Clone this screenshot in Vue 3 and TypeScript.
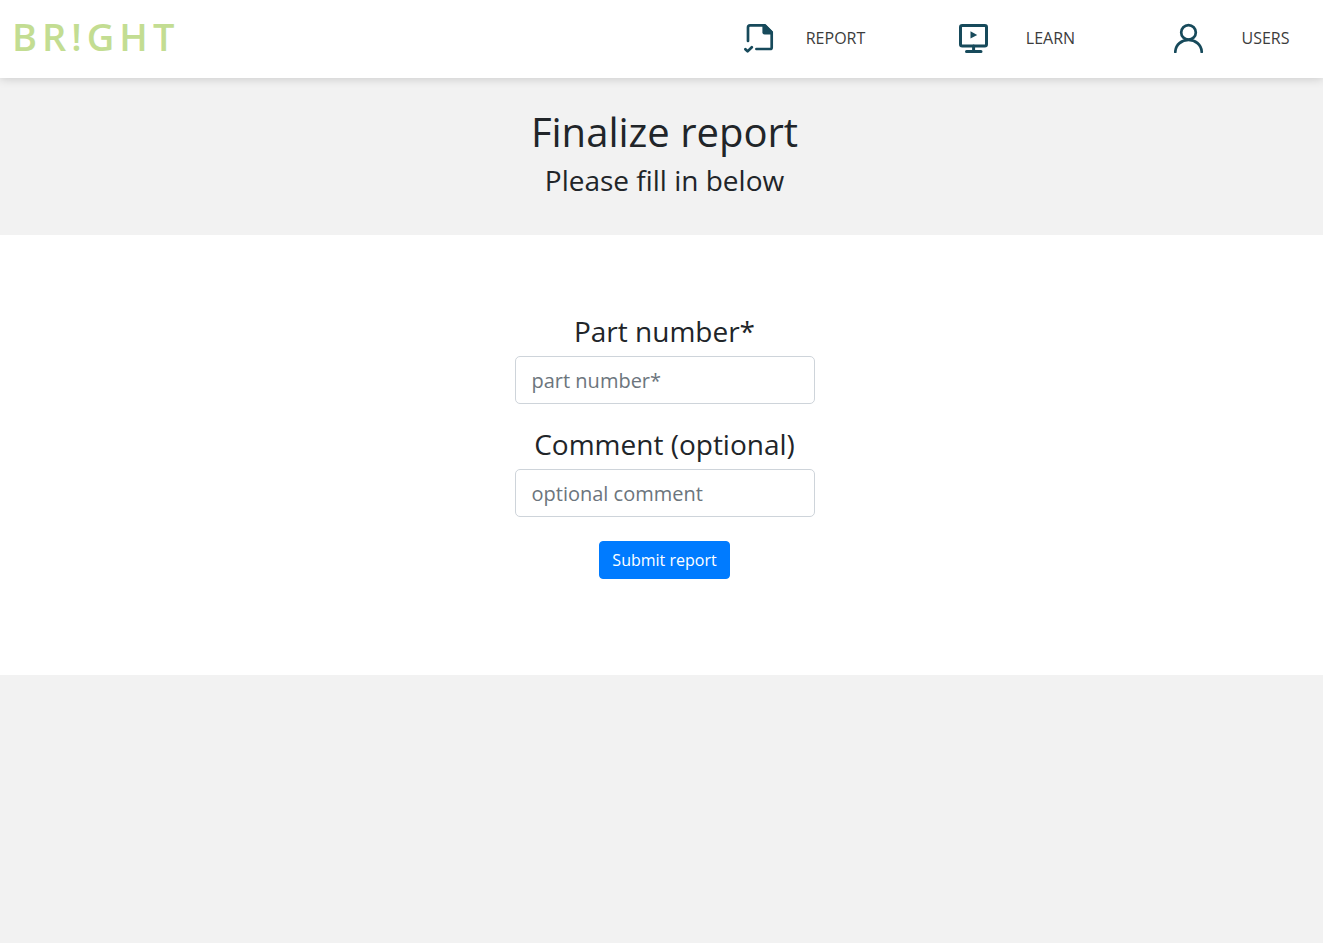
<script setup lang="ts">
import { ref } from 'vue'

const partNumber = ref('')
const comment = ref('')
</script>

<template>
  <div class="page">
    <header class="topbar">
      <a class="brand" href="#">BR!GHT</a>
      <nav class="nav">
        <a class="nav-item" href="#report">
          <svg class="icon" viewBox="0 -1 30 30" aria-hidden="true">
            <path class="line" d="M4 17V3.6Q4 1.4 6 1.4H21L27.7 8.2V23.4Q27.7 25 26.1 25H12.4" />
            <path class="fill" d="M18.4 .5H21.5L28.8 7.8V10.4H20.6Q18.4 10.4 18.4 8.2Z" />
            <path class="line" d="M1.4 25.2L3.6 27.4L7.8 23.2" />
          </svg>
          <span class="nav-label">REPORT</span>
        </a>
        <a class="nav-item" href="#learn">
          <svg class="icon" viewBox="0 -1 30 30" aria-hidden="true">
            <rect class="line thick" x="1.5" y="1.5" width="26" height="20.5" rx="1.8" />
            <path class="fill" d="M11.5 7.2L18.2 10.9L11.5 14.6Z" />
            <path class="line thick" d="M14.6 22V27.4M7.5 27.5H22" />
          </svg>
          <span class="nav-label">LEARN</span>
        </a>
        <a class="nav-item" href="#users">
          <svg class="icon" viewBox="0 -1 30 30" aria-hidden="true">
            <circle class="line" cx="14.5" cy="8.4" r="7.3" />
            <path class="line" d="M1.3 28V27.6C1.8 20.6 7.6 15.9 14.5 15.9S27.2 20.6 27.7 27.6V28" />
          </svg>
          <span class="nav-label">USERS</span>
        </a>
      </nav>
    </header>

    <section class="hero">
      <h1>Finalize report</h1>
      <h2>Please fill in below</h2>
    </section>

    <main class="content">
      <form class="form" @submit.prevent>
        <div class="field">
          <label for="part-number">Part number*</label>
          <input id="part-number" v-model="partNumber" type="text" placeholder="part number*" />
        </div>
        <div class="field">
          <label for="comment">Comment (optional)</label>
          <input id="comment" v-model="comment" type="text" placeholder="optional comment" />
        </div>
        <button type="submit">Submit report</button>
      </form>
    </main>
  </div>
</template>

<style>
body {
  margin: 0;
  background: #f2f2f2;
}
</style>

<style scoped>
.page,
.page * {
  box-sizing: border-box;
}

.page {
  color: #212529;
  font-family: "Open Sans", "Noto Sans", sans-serif;
  font-size: 16px;
  line-height: 24px;
}

.topbar {
  position: relative;
  display: flex;
  align-items: center;
  justify-content: space-between;
  height: 78px;
  padding: 0 15px 2px 12px;
  background: #fff;
  box-shadow: 0 0 10px rgba(0, 0, 0, 0.2);
}

.brand {
  padding-bottom: 4px;
  color: #c3dd92;
  font-size: 38px;
  font-weight: 600;
  line-height: 48px;
  letter-spacing: 5px;
  text-decoration: none;
}

.nav {
  display: flex;
  gap: 81px;
}

.nav-item {
  display: flex;
  align-items: center;
  gap: 19px;
  color: #3c3c3c;
  font-weight: 500;
  text-decoration: none;
}

.nav-label {
  width: 85px;
  text-align: center;
}

.icon {
  width: 30px;
  height: 30px;
}

.line {
  fill: none;
  stroke: #174a5b;
  stroke-width: 2.7;
  stroke-linecap: round;
  stroke-linejoin: round;
}

.thick {
  stroke-width: 3;
}

.fill {
  fill: #174a5b;
}

.hero {
  padding: 30px 0 30px 6px;
  text-align: center;
}

h1,
h2 {
  margin: 0 0 8px;
  font-weight: 400;
}

h1 {
  font-size: 40px;
  line-height: 48px;
}

h2 {
  font-size: 28px;
  line-height: 33px;
}

.content {
  padding: 80px 0 96px 6px;
  background: #fff;
}

.form {
  display: flex;
  flex-direction: column;
  align-items: center;
  gap: 24px;
}

.field {
  display: flex;
  flex-direction: column;
  gap: 8px;
  width: 300px;
}

label {
  font-size: 28px;
  line-height: 33px;
  text-align: center;
}

input {
  width: 100%;
  height: 48px;
  padding: 8px 16px;
  border: 1px solid #ced4da;
  border-radius: 5px;
  background: #fff;
  color: #495057;
  font: inherit;
  font-size: 20px;
  line-height: 30px;
}

input::placeholder {
  color: #6c757d;
  opacity: 1;
}

button {
  padding: 6px 12px;
  border: 1px solid #007bff;
  border-radius: 4px;
  background: #007bff;
  color: #fff;
  font: inherit;
  cursor: pointer;
}
</style>
